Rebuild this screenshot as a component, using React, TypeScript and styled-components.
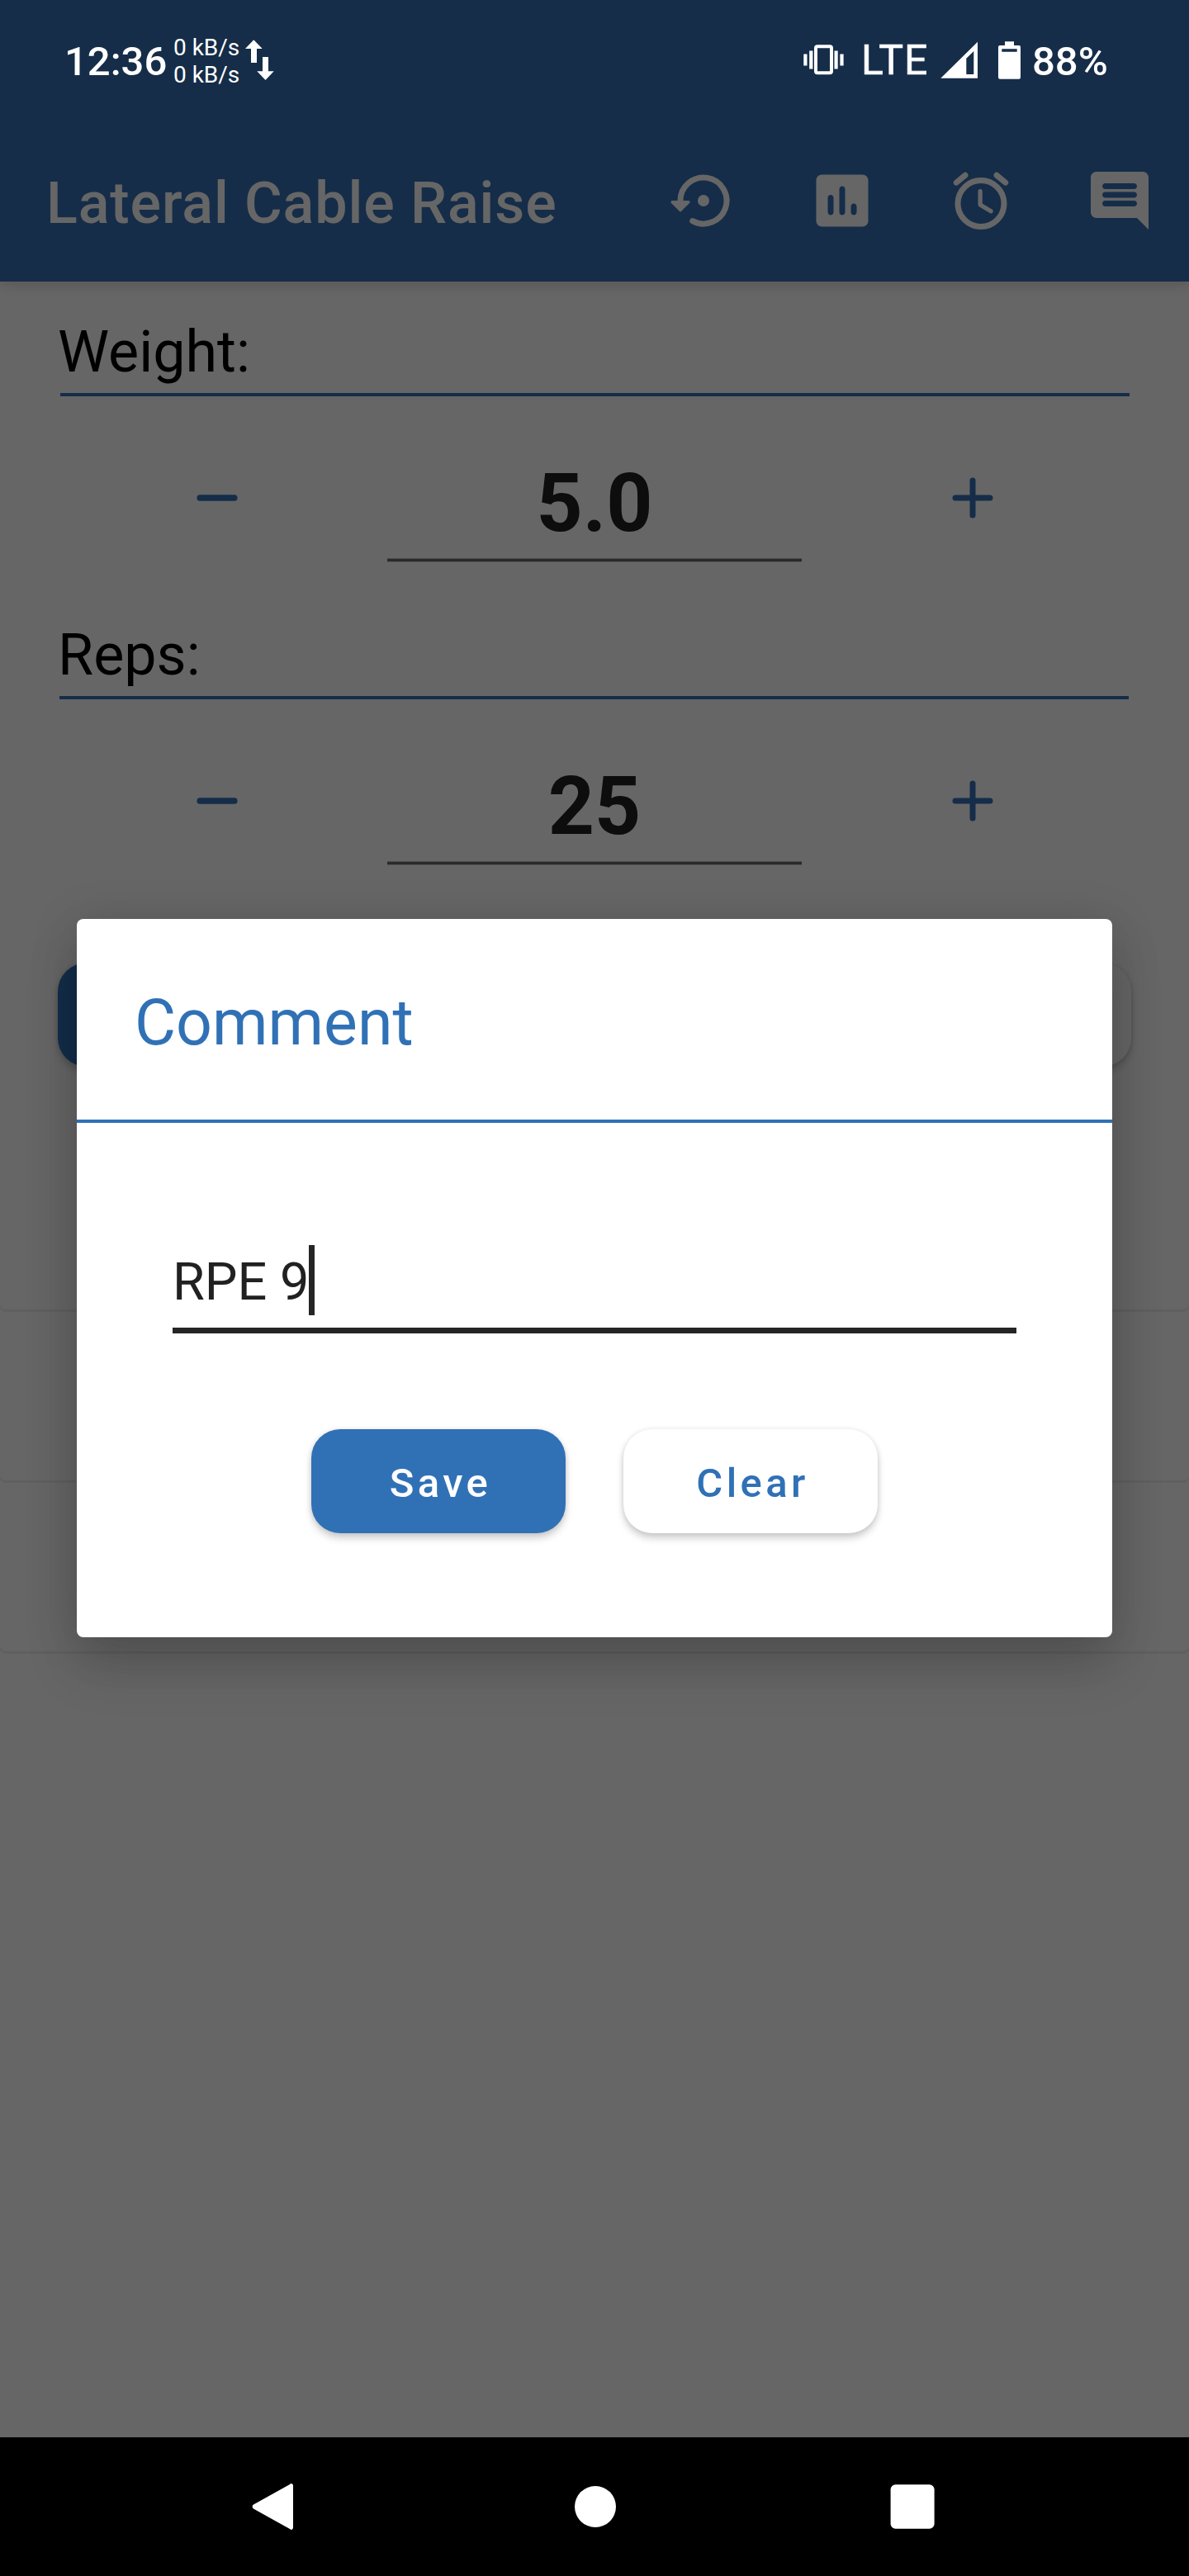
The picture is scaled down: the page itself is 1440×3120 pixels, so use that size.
import React from 'react';
import styled, { createGlobalStyle } from 'styled-components';

const ACCENT = '#3071b6';

const GlobalStyle = createGlobalStyle`
  * { box-sizing: border-box; }
  body { margin: 0; background: #666; }
  h1, h2, p { margin: 0; font-weight: 400; }
  button { border: 0; padding: 0; background: none; font: inherit; color: inherit; }
  svg { display: block; flex: none; }
`;

const Screen = styled.div`
  display: grid;
  width: 1440px;
  height: 3120px;
  overflow: hidden;
  font-family: Roboto, sans-serif;
`;

/* Page, dialog scrim and system bars share one grid cell and stack in order. */
const Layer = styled.div`
  grid-area: 1 / 1;
  width: 1440px;
  height: 3120px;
  min-width: 0;
`;

const Page = styled(Layer)`
  display: flex;
  flex-direction: column;
  background: #fff;
`;

const AppBar = styled.header`
  flex: none;
  display: flex;
  align-items: center;
  height: 341px;
  padding: 145px 0 0 56px;
  background: #3571b6;
  color: #fff;
  box-shadow: 0 6px 14px rgba(0, 0, 0, 0.13);
`;

const Title = styled.h1`
  flex: 1;
  padding-top: 6px;
  font-size: 70px;
  line-height: 84px;
  font-weight: 500;
  letter-spacing: 0.9px;
  white-space: nowrap;
`;

const BarAction = styled.button`
  display: flex;
  align-items: center;
  justify-content: center;
  width: 168px;
  height: 168px;
`;

const Form = styled.main`
  display: flex;
  flex-direction: column;
  gap: 70px;
  padding-top: 43px;
`;

const Field = styled.section`
  height: 297px;
`;

const FieldLabel = styled.h2`
  height: 92px;
  padding-left: 70px;
  font-size: 70px;
  line-height: 84px;
  color: #000;
`;

const FieldRule = styled.div<{ $left: number }>`
  width: 1295px;
  height: 4px;
  margin-left: ${(p) => p.$left}px;
  background: #3571b6;
`;

const Stepper = styled.div`
  display: flex;
  gap: 164px;
  height: 201px;
  padding-left: 221px;
`;

const StepButton = styled.button`
  height: 84px;
  margin-top: 81px;
  color: #3571b6;

  &:last-child {
    margin-left: 1px;
  }
`;

const StepValue = styled.div`
  width: 502px;
  padding-top: 68px;
`;

const Amount = styled.p`
  font-size: 98px;
  line-height: 123px;
  font-weight: 700;
  text-align: center;
  color: #222;
`;

const AmountRule = styled.div`
  height: 5px;
  margin-top: 5px;
  background: #696969;
  border-top: 1px solid #bdbdbd;
  border-bottom: 1px solid #d8d8d8;
`;

const FormActions = styled.div`
  display: flex;
  justify-content: space-between;
  padding: 0 70px;
  margin-top: 118px;
`;

const Button = styled.button<{ $primary?: boolean; $width?: number }>`
  width: ${(p) => p.$width ?? 308}px;
  height: 126px;
  padding: 5px 0 0 5px;
  border-radius: 35px;
  background: ${(p) => (p.$primary ? ACCENT : '#fff')};
  color: ${(p) => (p.$primary ? '#fff' : ACCENT)};
  font-size: 49px;
  font-weight: 500;
  letter-spacing: 4.38px;
  line-height: 60px;
  text-align: center;
  box-shadow: 0 6px 10px rgba(0, 0, 0, 0.19), 0 0 6px rgba(0, 0, 0, 0.09);
`;

const SetList = styled.div`
  display: flex;
  flex-direction: column;
  gap: 4px;
  margin-top: 91px;
`;

const SetCard = styled.div`
  height: 203px;
  border-radius: 7px;
  background: #fff;
  box-shadow: 0 3px 1px rgba(0, 0, 0, 0.07);
`;

const Scrim = styled(Layer)`
  padding: 1113px 93px 0;
  background: rgba(0, 0, 0, 0.6);
`;

const Dialog = styled.div`
  height: 870px;
  border-radius: 8px;
  background: #fff;
  box-shadow: 0 36px 64px rgba(0, 0, 0, 0.16), 0 6px 60px rgba(0, 0, 0, 0.13);
`;

const DialogTitle = styled.h2`
  height: 247px;
  padding: 80px 0 0 70px;
  border-bottom: 4px solid ${ACCENT};
  font-size: 77px;
  line-height: 92px;
  color: ${ACCENT};
`;

const CommentField = styled.div`
  display: flex;
  align-items: center;
  height: 107px;
  width: 1022px;
  margin: 148px 0 0 116px;
  padding-bottom: 15px;
  border-bottom: 7px solid #252525;
  color: #212121;
  font-size: 63px;
  line-height: 76px;
`;

const CommentText = styled.span`
  padding-top: 5px;
`;

const Caret = styled.span`
  width: 7px;
  height: 85px;
  background: #252525;
`;

const DialogActions = styled.div`
  display: flex;
  justify-content: center;
  gap: 70px;
  margin-top: 116px;
`;

const SystemBars = styled(Layer)`
  display: flex;
  flex-direction: column;
  justify-content: space-between;
  color: #fff;
`;

const StatusBar = styled.div`
  display: flex;
  justify-content: space-between;
  height: 145px;
  padding: 45px 98px 0 78px;
`;

const StatusGroup = styled.div`
  display: flex;
  align-items: flex-start;
`;

const StatusText = styled.span<{ $width: number }>`
  width: ${(p) => p.$width}px;
  font-size: 49px;
  line-height: 60px;
  font-weight: 500;
  white-space: nowrap;
`;

const NetworkType = styled.span`
  width: 96px;
  margin-top: -2px;
  font-size: 50px;
  line-height: 60px;
  letter-spacing: 1px;
  -webkit-text-stroke: 0.6px #fff;
`;

const Speeds = styled.div`
  width: 87px;
  font-size: 28px;
  line-height: 33px;
  white-space: nowrap;
  margin-top: -4px;
`;

const NavBar = styled.nav`
  display: flex;
  align-items: center;
  justify-content: space-between;
  height: 168px;
  padding: 0 293px 0 288px;
  background: #000;
`;

const Icon = ({ children }: { children: React.ReactNode }) => (
  <svg width="84" height="84" viewBox="0 0 24 24" fill="currentColor">
    {children}
  </svg>
);

const barIcons = [
  <Icon key="restore">
    <circle cx="12" cy="12" r="2" />
    <path d="M4 12a8 8 0 1 1 4.2 7.05" fill="none" stroke="currentColor" strokeWidth="2" strokeLinecap="round" />
    <path d="M1.2 12h5.6c.45 0 .67.54.35.85l-2.8 2.8a.5.5 0 0 1-.7 0l-2.8-2.8A.5.5 0 0 1 1.2 12z" />
  </Icon>,
  <Icon key="chart">
    <path
      fillRule="evenodd"
      d="M19 3H5c-1.100 0-2 .9-2 2v14c0 1.100.9 2 2 2h14c1.100 0 2-.9 2-2V5c0-1.100-.9-2-2-2zM8 17c-.55 0-1-.45-1-1v-5c0-.55.45-1 1-1s1 .45 1 1v5c0 .55-.45 1-1 1zm4 0c-.55 0-1-.45-1-1V8c0-.55.45-1 1-1s1 .45 1 1v8c0 .55-.45 1-1 1zm4 0c-.55 0-1-.45-1-1v-2c0-.55.45-1 1-1s1 .45 1 1v2c0 .55-.45 1-1 1z"
    />
  </Icon>,
  <Icon key="alarm">
    <g fill="none" stroke="currentColor" strokeLinecap="round">
      <circle cx="12" cy="13" r="8" strokeWidth="2" />
      <path d="M3.500 5.760l3.060-2.550M20.500 5.760l-3.060-2.550" strokeWidth="2" />
      <path d="M11.750 8.750v4.680l3.700 2.220" strokeWidth="1.500" strokeLinejoin="round" />
    </g>
  </Icon>,
  <Icon key="comment">
    <path
      fillRule="evenodd"
      d="M22 4c0-1.100-.9-2-2-2H4c-1.100 0-2 .9-2 2v12c0 1.100.9 2 2 2h14l4 4V4zm-5 10H7c-.55 0-1-.45-1-1s.45-1 1-1h10c.55 0 1 .45 1 1s-.45 1-1 1zm0-3H7c-.55 0-1-.45-1-1s.45-1 1-1h10c.55 0 1 .45 1 1s-.45 1-1 1zm0-3H7c-.55 0-1-.45-1-1s.45-1 1-1h10c.55 0 1 .45 1 1s-.45 1-1 1z"
    />
  </Icon>,
];

const fields = [
  { label: 'Weight:', value: '5.0', left: 73 },
  { label: 'Reps:', value: '25', left: 72 },
];

export default function App() {
  return (
    <Screen>
      <GlobalStyle />
      <Page>
        <AppBar>
          <Title>Lateral Cable Raise</Title>
          {barIcons.map((icon) => (
            <BarAction key={icon.key}>{icon}</BarAction>
          ))}
        </AppBar>
        <Form>
          {fields.map((f) => (
            <Field key={f.label}>
              <FieldLabel>{f.label}</FieldLabel>
              <FieldRule $left={f.left} />
              <Stepper>
                <StepButton>
                  <Icon>
                    <rect x="5" y="10.900" width="14" height="2.200" rx="1" />
                  </Icon>
                </StepButton>
                <StepValue>
                  <Amount>{f.value}</Amount>
                  <AmountRule />
                </StepValue>
                <StepButton>
                  <Icon>
                    <rect x="5" y="11" width="14" height="2" rx="1" />
                    <rect x="11" y="5" width="2" height="14" rx="1" />
                  </Icon>
                </StepButton>
              </Stepper>
            </Field>
          ))}
        </Form>
        <FormActions>
          <Button $primary $width={615} />
          <Button $width={615} />
        </FormActions>
        <SetList>
          <SetCard />
          <SetCard />
          <SetCard />
        </SetList>
      </Page>

      <Scrim>
        <Dialog>
          <DialogTitle>Comment</DialogTitle>
          <CommentField>
            <CommentText>RPE 9</CommentText>
            <Caret />
          </CommentField>
          <DialogActions>
            <Button $primary>Save</Button>
            <Button>Clear</Button>
          </DialogActions>
        </Dialog>
      </Scrim>

      <SystemBars>
        <StatusBar>
          <StatusGroup>
            <StatusText $width={132}>12:36</StatusText>
            <Speeds>
              <div>0 kB/s</div>
              <div>0 kB/s</div>
            </Speeds>
            <svg width="35" height="55" viewBox="297 45 35 55" fill="#fff">
              <path d="M307.300 48.300L317.700 59H311v17h-7V59h-7zM318 69h7v17.300h6.700L321.500 97l-10.200-10.700h6.700z" />
            </svg>
          </StatusGroup>
          <StatusGroup>
            <svg width="70" height="55" viewBox="973 45 70 55" fill="#fff">
              <rect x="988" y="56.300" width="19" height="32" rx="2" fill="none" stroke="#fff" strokeWidth="4" />
              <path d="M973.300 65.500h4.200v14h-4.200zM980.200 61.500h4.200v22h-4.200zM1010.500 61.500h4.200v22h-4.200zM1017.400 65.500h4.200v14h-4.200z" />
            </svg>
            <NetworkType>LTE</NetworkType>
            <svg width="45" height="55" viewBox="1139 45 45 55" fill="#fff">
              <path fillRule="evenodd" d="M1139.300 94.700L1184 50.700v44zM1170.300 70.700V90h9V62z" />
            </svg>
            <svg width="66" height="55" viewBox="1184 45 66 55" fill="#fff">
              <path
                fillRule="evenodd"
                d="M1217 50.300h11V55h6a2 2 0 0 1 2 2v36.700a2 2 0 0 1-2 2h-23a2 2 0 0 1-2-2V57a2 2 0 0 1 2-2h6zM1213.300 59.300v3.400h18.400v-3.400z"
              />
            </svg>
            <StatusText $width={92}>88%</StatusText>
          </StatusGroup>
        </StatusBar>
        <NavBar>
          <svg width="84" height="84" viewBox="288 2994 84 84" fill="#fff">
            <path d="M355 3010.500v51a2.300 2.300 0 0 1-4 1.600l-44-24.600a3 3 0 0 1 0-5l44-24.600a2.300 2.300 0 0 1 4 1.600z" />
          </svg>
          <svg width="84" height="84" viewBox="0 0 84 84" fill="#fff">
            <circle cx="45" cy="42" r="25" />
          </svg>
          <svg width="84" height="84" viewBox="0 0 84 84" fill="#fff">
            <rect x="15.600" y="15.200" width="53" height="53.600" rx="6" />
          </svg>
        </NavBar>
      </SystemBars>
    </Screen>
  );
}
